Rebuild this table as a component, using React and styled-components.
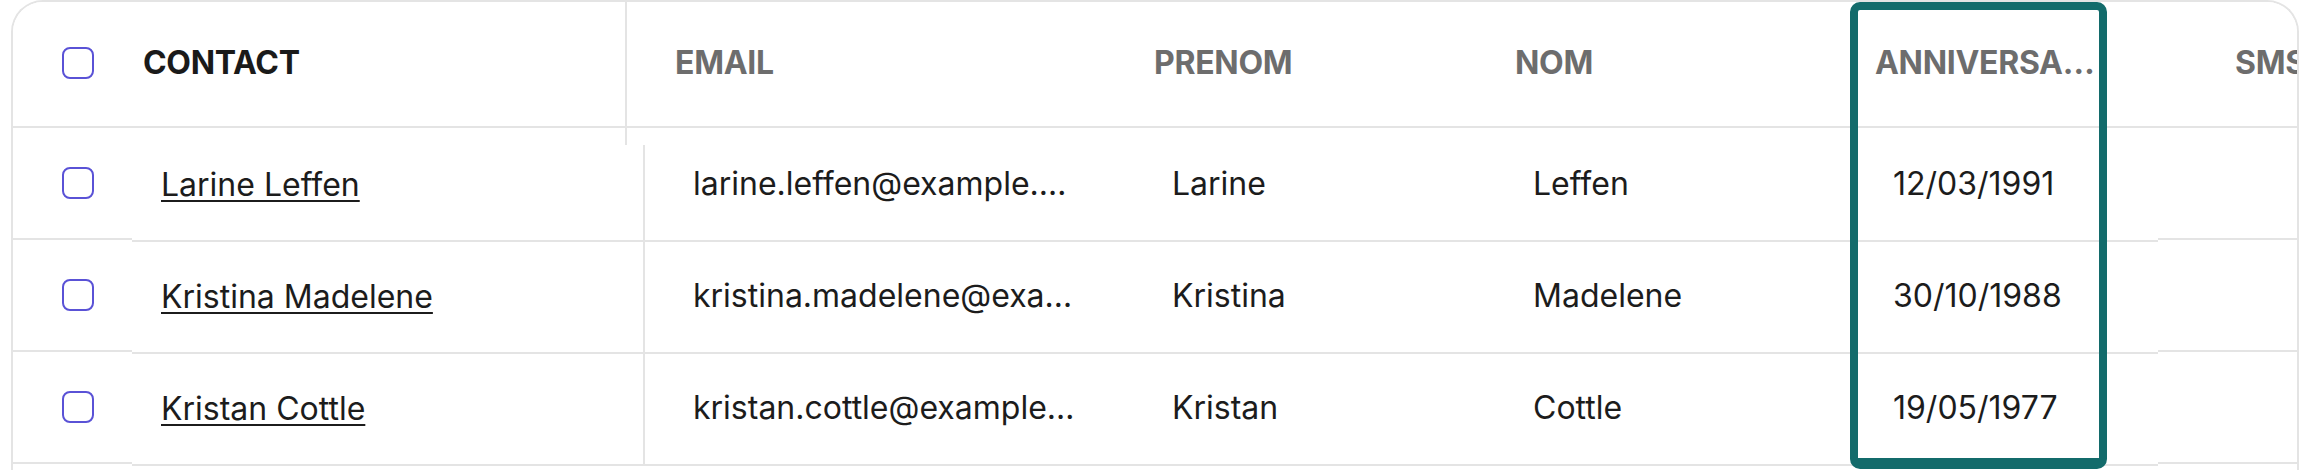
import React from "react";
import styled, { createGlobalStyle } from "styled-components";

const Global = createGlobalStyle`
  html, body { margin: 0; padding: 0; background: #ffffff; overflow: hidden; }
  body { font-family: "Inter", "Liberation Sans", sans-serif; }
`;

const LINE = "#e4e4e4";

const Card = styled.div`
  position: relative;
  margin-left: 11px;
  width: 2288px;
  height: 520px;
  box-sizing: border-box;
  border: 2px solid ${LINE};
  border-bottom: none;
  border-radius: 32px 32px 0 0;
  overflow: hidden;
  background: #fff;
`;

const HeaderBar = styled.div`
  position: relative;
  z-index: 1;
  display: flex;
  height: 143px;
  margin-bottom: -17px;
  background: #fff;
`;

const HeadCell = styled.div`
  flex: 0 0 ${(p) => p.$w}px;
  box-sizing: border-box;
  display: flex;
  flex-direction: column;
  border-right: ${(p) => (p.$divider ? `2px solid ${LINE}` : "none")};
`;

const HeadLabel = styled.div`
  height: 126px;
  box-sizing: border-box;
  border-bottom: 2px solid ${LINE};
  display: flex;
  align-items: center;
  padding-left: ${(p) => p.$pad}px;
  padding-bottom: 3px;
`;

const HeadText = styled.span`
  font-size: 32px;
  font-weight: 700;
  color: ${(p) => (p.$dark ? "#1a1a1a" : "#6d6d6d")};
  letter-spacing: -0.3px;
  white-space: nowrap;
  overflow: hidden;
  text-overflow: ellipsis;
  max-width: ${(p) => (p.$max ? `${p.$max}px` : "none")};
`;

const Box = styled.span`
  display: inline-block;
  flex: 0 0 auto;
  width: 32px;
  height: 32px;
  box-sizing: border-box;
  border: 2px solid #5a52d6;
  border-radius: 8px;
  margin-left: ${(p) => p.$ml || 0}px;
`;

const Body = styled.div`
  display: flex;
`;

const SideCol = styled.div`
  flex: 0 0 ${(p) => p.$w}px;
  display: flex;
  flex-direction: column;
`;

const SideRow = styled.div`
  height: 112px;
  box-sizing: border-box;
  border-bottom: 2px solid ${LINE};
  display: flex;
  align-items: center;
`;

const MainArea = styled.div`
  flex: 1 1 auto;
  min-width: 0;
  overflow: hidden;
  padding-top: 2px;
  display: flex;
  flex-direction: column;
`;

const Row = styled.div`
  display: flex;
  height: 112px;
  box-sizing: border-box;
  border-bottom: 2px solid ${LINE};
`;

const Cell = styled.div`
  flex: 0 0 ${(p) => p.$w}px;
  box-sizing: border-box;
  display: flex;
  align-items: center;
  padding-left: ${(p) => p.$pad}px;
  padding-bottom: 3px;
  border-right: ${(p) => (p.$divider ? `2px solid ${LINE}` : "none")};
  margin-bottom: ${(p) => (p.$divider ? "-2px" : "0")};
`;

const CellText = styled.span`
  font-size: 32px;
  color: #1c1c1c;
  white-space: nowrap;
  overflow: hidden;
  text-overflow: ellipsis;
  max-width: ${(p) => (p.$max ? `${p.$max}px` : "none")};
`;

const NameLink = styled.a`
  font-size: 32px;
  color: #1c1c1c;
  text-decoration: underline;
  text-decoration-thickness: 2px;
  text-underline-offset: 4px;
  white-space: nowrap;
`;

const Highlight = styled.div`
  position: absolute;
  left: 1837px;
  top: 0;
  width: 257px;
  height: 467px;
  box-sizing: border-box;
  border: 8px solid #136b6b;
  border-bottom-width: 11px;
  border-radius: 10px;
  pointer-events: none;
  z-index: 2;
`;

const columns = [
  { key: "email", label: "Email", w: 503, pad: 48, max: 388 },
  { key: "prenom", label: "Prenom", w: 361, pad: 24 },
  { key: "nom", label: "Nom", w: 360, pad: 24 },
  { key: "anniv", label: "Anniversaire", w: 360, pad: 24, headMax: 224 },
  { key: "sms", label: "SMS", w: 360, pad: 24 },
];

const rows = [
  {
    name: "Larine Leffen",
    email: "larine.leffen@example.com",
    prenom: "Larine",
    nom: "Leffen",
    anniv: "12/03/1991",
    sms: "",
  },
  {
    name: "Kristina Madelene",
    email: "kristina.madelene@example.com",
    prenom: "Kristina",
    nom: "Madelene",
    anniv: "30/10/1988",
    sms: "",
  },
  {
    name: "Kristan Cottle",
    email: "kristan.cottle@example.com",
    prenom: "Kristan",
    nom: "Cottle",
    anniv: "19/05/1977",
    sms: "",
  },
];

export default function App() {
  return (
    <>
      <Global />
      <Card>
        <HeaderBar>
          <HeadCell $w={101}>
            <HeadLabel $pad={49}>
              <Box />
            </HeadLabel>
          </HeadCell>
          <HeadCell $w={513} $divider>
            <HeadLabel $pad={29}>
              <HeadText $dark>CONTACT</HeadText>
            </HeadLabel>
          </HeadCell>
          {columns.map((c) => (
            <HeadCell key={c.key} $w={c.w}>
              <HeadLabel $pad={c.pad}>
                <HeadText $max={c.headMax || c.max}>{c.label.toUpperCase()}</HeadText>
              </HeadLabel>
            </HeadCell>
          ))}
        </HeaderBar>
        <Body>
          <SideCol $w={119}>
            {rows.map((r) => (
              <SideRow key={r.name}>
                <Box $ml={49} />
              </SideRow>
            ))}
          </SideCol>
          <MainArea>
            {rows.map((r) => (
              <Row key={r.name}>
                <Cell $w={513} $pad={29} $divider>
                  <NameLink href="#">{r.name}</NameLink>
                </Cell>
                {columns.map((c) => (
                  <Cell key={c.key} $w={c.w} $pad={c.pad}>
                    <CellText $max={c.max}>{r[c.key]}</CellText>
                  </Cell>
                ))}
              </Row>
            ))}
          </MainArea>
          <SideCol $w={139}>
            {rows.map((r) => (
              <SideRow key={r.name} />
            ))}
          </SideCol>
        </Body>
        <Highlight />
      </Card>
    </>
  );
}
